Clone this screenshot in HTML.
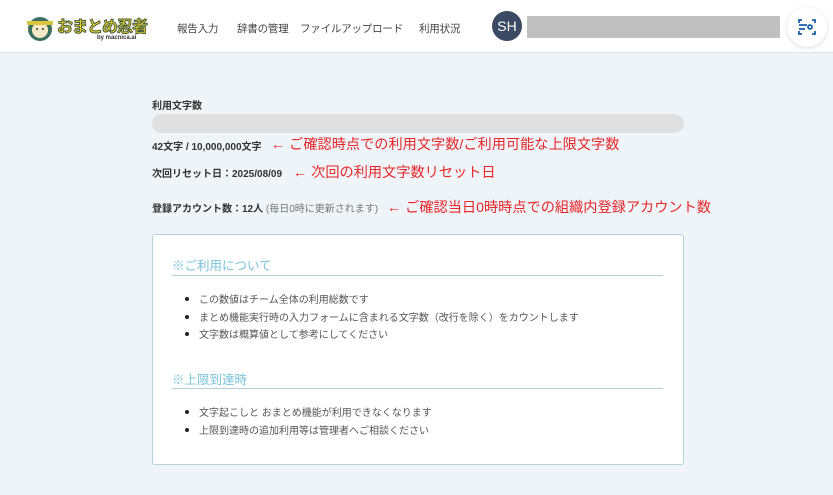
<!DOCTYPE html>
<html><head><meta charset="utf-8"><style>
*{margin:0;padding:0;box-sizing:border-box}
body{width:833px;height:495px;overflow:hidden;background:#eef4f7;font-family:"Liberation Sans","Noto Sans CJK JP",sans-serif;position:relative;color:#333}
.hdr{position:absolute;left:0;top:0;width:833px;height:53px;background:#fff;border-bottom:1px solid #dfe5e8}
.a{position:absolute;white-space:nowrap}
.nav{font-size:10.5px;color:#444;top:21px;letter-spacing:-0.2px}
.b{font-weight:bold;font-size:10px;color:#333}
.r{color:#e8262a;font-size:14.2px}
ul{position:absolute;list-style:none}
li{font-size:10px;color:#555;height:17.5px;position:relative;padding-left:27px}
li:before{content:"";position:absolute;left:13px;top:6px;width:4px;height:4px;border-radius:50%;background:#222}
.h{color:#79c2da;font-size:12.5px}
.ln{position:absolute;height:1px;background:#b7cfd8;left:172px;width:491px}
</style></head><body>
<div class="hdr"></div>
<svg class="a" style="left:24px;top:12px" width="32" height="32"><circle cx="16" cy="17" r="12" fill="#3d6e5e"/><circle cx="16" cy="18" r="8" fill="#f6e9c8"/><circle cx="13" cy="17" r="1" fill="#333"/><circle cx="19" cy="17" r="1" fill="#333"/><rect x="3" y="9" width="26" height="4" fill="#d9c53a"/></svg>
<div class="a" style="left:57px;top:13px;font-size:16px;font-weight:bold;color:#e6d52a;-webkit-text-stroke:1px #4b5d3a;letter-spacing:-1px">おまとめ忍者</div>
<div class="a" style="left:97px;top:35px;font-size:6px;font-weight:bold;color:#333">by macnica.ai</div>
<div class="a nav" style="left:177px">報告入力</div>
<div class="a nav" style="left:237px">辞書の管理</div>
<div class="a nav" style="left:300px">ファイルアップロード</div>
<div class="a nav" style="left:419px">利用状況</div>
<div class="a" style="left:492px;top:11px;width:30px;height:30px;border-radius:50%;background:#3a4a63;color:#fff;font-size:14px;line-height:30px;text-align:center">SH</div>
<div class="a" style="left:527px;top:16px;width:253px;height:22px;background:#c0c0c0"></div>
<div class="a" style="left:787px;top:7px;width:40px;height:40px;border-radius:50%;background:#fff;box-shadow:0 1px 4px rgba(0,0,0,.15)"></div>
<svg class="a" style="left:795px;top:15px" width="24" height="24" fill="none" stroke="#1a5fa8" stroke-width="1.8"><path d="M4 8V5h3M17 5h3v3M20 16v3h-3M7 19H4v-3"/><path d="M4 10h8M4 14h6"/><circle cx="15" cy="12" r="2"/></svg>
<div class="a b" style="left:152px;top:97px">利用文字数</div>
<div class="a" style="left:152px;top:114px;width:532px;height:19px;border-radius:10px;background:#e0e0e0"></div>
<div class="a b" style="left:152px;top:138px">42文字 / 10,000,000文字</div>
<div class="a r" style="left:271px;top:134px">← ご確認時点での利用文字数/ご利用可能な上限文字数</div>
<div class="a b" style="left:152px;top:165px">次回リセット日：2025/08/09</div>
<div class="a r" style="left:293px;top:162px">← 次回の利用文字数リセット日</div>
<div class="a b" style="left:152px;top:200px">登録アカウント数：12人 <span style="font-weight:normal;color:#777">(毎日0時に更新されます)</span></div>
<div class="a r" style="left:387px;top:197px">← ご確認当日0時時点での組織内登録アカウント数</div>
<div class="a" style="left:152px;top:234px;width:532px;height:231px;background:#fff;border:1px solid #b8d2dc;border-radius:3px"></div>
<div class="a h" style="left:172px;top:255px">※ご利用について</div>
<div class="ln" style="top:275px"></div>
<ul style="left:172px;top:291px"><li>この数値はチーム全体の利用総数です</li><li>まとめ機能実行時の入力フォームに含まれる文字数（改行を除く）をカウントします</li><li>文字数は概算値として参考にしてください</li></ul>
<div class="a h" style="left:172px;top:369px">※上限到達時</div>
<div class="ln" style="top:388px"></div>
<ul style="left:172px;top:404px"><li>文字起こしと おまとめ機能が利用できなくなります</li><li>上限到達時の追加利用等は管理者へご相談ください</li></ul>
</body></html>
